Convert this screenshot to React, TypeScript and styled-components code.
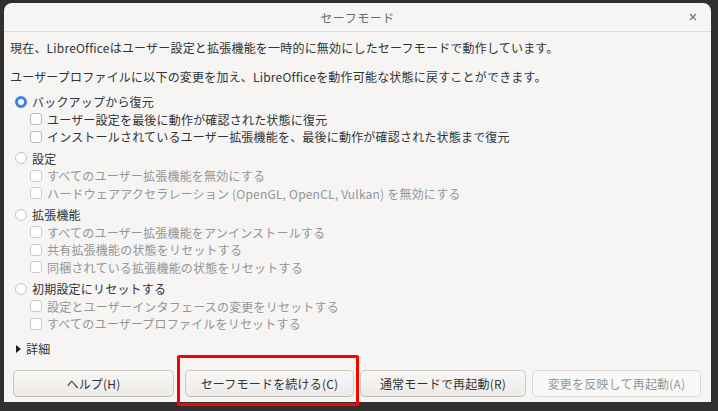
import React from "react";
import styled, { createGlobalStyle } from "styled-components";

const Global = createGlobalStyle`
  html, body { margin: 0; padding: 0; background: #303030; }
  body { font-family: "Noto Sans CJK JP", "Noto Sans", sans-serif; font-size: 12px; color: #2e3436; letter-spacing: 0.2px; }
`;

const Page = styled.div`
  width: 718px;
  height: 411px;
  box-sizing: border-box;
  padding: 3px 7px 0 4px;
  background: #303030;
  position: relative;
`;

const Dialog = styled.div`
  width: 707px;
  height: 399px;
  background: #f6f5f4;
  border-radius: 8px 8px 0 0;
  display: flex;
  flex-direction: column;
  position: relative;
`;

const TitleBar = styled.div`
  height: 28px;
  border-bottom: 1px solid #dedbd8;
  display: grid;
  grid-template-columns: 1fr auto 1fr;
  align-items: center;
  flex-shrink: 0;
`;

const Title = styled.div`
  grid-column: 2;
  color: #6a6a6a;
  font-size: 12px;
  letter-spacing: 0.5px;
`;

const Close = styled.div`
  grid-column: 3;
  justify-self: end;
  margin-right: 14px;
  width: 8px;
  height: 8px;
  display: flex;
  align-items: center;
  justify-content: center;
`;

const Content = styled.div`
  padding: 7px 0 0 6px;
  display: flex;
  flex-direction: column;
  flex: 1;
`;

const Para = styled.div<{ $top?: number }>`
  line-height: 17px;
  margin-top: ${(p) => p.$top ?? 0}px;
  white-space: nowrap;
`;

const Options = styled.div`
  margin-top: 8px;
  display: flex;
  flex-direction: column;
  gap: 4px;
  padding-left: 5px;
`;

const Group = styled.div`
  display: flex;
  flex-direction: column;
`;

const Row = styled.div<{ $indent?: boolean; $disabled?: boolean }>`
  height: 17.5px;
  display: flex;
  align-items: center;
  gap: 5px;
  padding-left: ${(p) => (p.$indent ? 15 : 0)}px;
  color: ${(p) => (p.$disabled ? "#939697" : "#2e3436")};
  white-space: nowrap;
`;

const Radio = styled.span<{ $checked?: boolean }>`
  width: 12px;
  height: 12px;
  box-sizing: border-box;
  border-radius: 50%;
  background: #fff;
  border: ${(p) => (p.$checked ? "3.5px solid #3584e4" : "1px solid #c6c3bf")};
  flex-shrink: 0;
`;

const Check = styled.span<{ $disabled?: boolean }>`
  width: 12px;
  height: 12px;
  box-sizing: border-box;
  border-radius: 3px;
  background: #fff;
  border: 1px solid ${(p) => (p.$disabled ? "#cfccc8" : "#bdb9b5")};
  flex-shrink: 0;
`;

const Expander = styled.div`
  margin-top: 7.5px;
  height: 17.5px;
  display: flex;
  align-items: center;
  gap: 5px;
  padding-left: 6px;
`;

const Arrow = styled.span`
  width: 0;
  height: 0;
  border-top: 4px solid transparent;
  border-bottom: 4px solid transparent;
  border-left: 5px solid #1e2224;
`;

const ButtonBar = styled.div`
  margin-top: auto;
  margin-left: -6px;
  padding: 0 0 5px 9px;
  display: flex;
  align-items: center;
`;

const Button = styled.div<{ $w: number; $ml?: number; $disabled?: boolean }>`
  width: ${(p) => p.$w}px;
  margin-left: ${(p) => p.$ml ?? 0}px;
  height: 27px;
  box-sizing: border-box;
  border: 1px solid ${(p) => (p.$disabled ? "#dcd9d5" : "#cdc7c2")};
  border-bottom-color: ${(p) => (p.$disabled ? "#dcd9d5" : "#bfb8b1")};
  border-radius: 5px;
  background: ${(p) => (p.$disabled ? "#faf9f8" : "linear-gradient(#f8f7f6, #edebe9)")};
  color: ${(p) => (p.$disabled ? "#939697" : "#2e3436")};
  display: flex;
  align-items: center;
  justify-content: center;
  white-space: nowrap;
`;

const Highlight = styled.div`
  position: absolute;
  left: 177px;
  top: 355px;
  width: 182px;
  height: 51px;
  box-sizing: border-box;
  border: 3px solid #ff0000;
  border-radius: 2px;
  pointer-events: none;
`;

type Opt = { label: string; disabled: boolean };
const groups: { label: string; checked?: boolean; items: Opt[] }[] = [
  {
    label: "バックアップから復元",
    checked: true,
    items: [
      { label: "ユーザー設定を最後に動作が確認された状態に復元", disabled: false },
      { label: "インストールされているユーザー拡張機能を、最後に動作が確認された状態まで復元", disabled: false },
    ],
  },
  {
    label: "設定",
    items: [
      { label: "すべてのユーザー拡張機能を無効にする", disabled: true },
      { label: "ハードウェアアクセラレーション (OpenGL, OpenCL, Vulkan) を無効にする", disabled: true },
    ],
  },
  {
    label: "拡張機能",
    items: [
      { label: "すべてのユーザー拡張機能をアンインストールする", disabled: true },
      { label: "共有拡張機能の状態をリセットする", disabled: true },
      { label: "同梱されている拡張機能の状態をリセットする", disabled: true },
    ],
  },
  {
    label: "初期設定にリセットする",
    items: [
      { label: "設定とユーザーインタフェースの変更をリセットする", disabled: true },
      { label: "すべてのユーザープロファイルをリセットする", disabled: true },
    ],
  },
];

export default function App() {
  return (
    <Page>
      <Global />
      <Dialog>
        <TitleBar>
          <Title>セーフモード</Title>
          <Close>
            <svg width="8" height="8" viewBox="0 0 8 8">
              <path d="M1 1L7 7M7 1L1 7" stroke="#7a7a7a" strokeWidth="1.4" />
            </svg>
          </Close>
        </TitleBar>
        <Content>
          <Para>現在、LibreOfficeはユーザー設定と拡張機能を一時的に無効にしたセーフモードで動作しています。</Para>
          <Para $top={12}>ユーザープロファイルに以下の変更を加え、LibreOfficeを動作可能な状態に戻すことができます。</Para>
          <Options>
            {groups.map((g) => (
              <Group key={g.label}>
                <Row>
                  <Radio $checked={g.checked} />
                  {g.label}
                </Row>
                {g.items.map((it) => (
                  <Row key={it.label} $indent $disabled={it.disabled}>
                    <Check $disabled={it.disabled} />
                    {it.label}
                  </Row>
                ))}
              </Group>
            ))}
          </Options>
          <Expander>
            <Arrow />
            詳細
          </Expander>
          <ButtonBar>
            <Button $w={161}>ヘルプ(H)</Button>
            <Button $w={169} $ml={11}>セーフモードを続ける(C)</Button>
            <Button $w={166} $ml={6}>通常モードで再起動(R)</Button>
            <Button $w={169} $ml={6} $disabled>変更を反映して再起動(A)</Button>
          </ButtonBar>
        </Content>
      </Dialog>
      <Highlight />
    </Page>
  );
}
